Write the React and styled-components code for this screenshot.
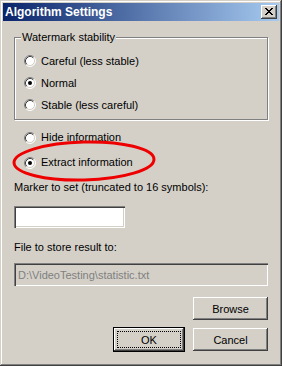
import React from 'react';
import styled, { createGlobalStyle } from 'styled-components';

const Global = createGlobalStyle`
  html, body {
    margin: 0;
    padding: 0;
    background: #d4d0c8;
  }
  * {
    box-sizing: border-box;
  }
`;

const Window = styled.div`
  position: relative;
  width: 282px;
  height: 366px;
  padding: 3px;
  background: #d4d0c8;
  font-family: 'Liberation Sans', Arial, sans-serif;
  font-size: 11px;
  color: #000;
  box-shadow: inset -1px -1px #404040, inset 1px 1px #d4d0c8,
    inset -2px -2px #808080, inset 2px 2px #fff;
  display: flex;
  flex-direction: column;
`;

const TitleBar = styled.div`
  height: 18px;
  display: flex;
  align-items: center;
  justify-content: space-between;
  padding: 0 2px 0 2px;
  background: linear-gradient(to right, #0a246a, #a6caf0);
`;

const Title = styled.span`
  color: #fff;
  font-weight: bold;
  font-size: 12px;
  line-height: 13px;
`;

const CloseButton = styled.div`
  width: 16px;
  height: 14px;
  background: #d4d0c8;
  display: flex;
  align-items: center;
  justify-content: center;
  box-shadow: inset -1px -1px #404040, inset 1px 1px #fff,
    inset -2px -2px #808080, inset 2px 2px #d4d0c8;
  svg {
    display: block;
    margin-top: -1px;
  }
`;

const Body = styled.div`
  flex: 1;
  display: flex;
  flex-direction: column;
  padding: 10px 11px 0 11px;
`;

const GroupBox = styled.fieldset`
  margin: 0;
  padding: 0;
  border: 1px solid #808080;
  box-shadow: 1px 1px 0 #fff, inset 1px 1px 0 #fff;
  min-width: 0;
`;

const Legend = styled.legend`
  margin-left: 6px;
  padding: 0 1px;
  line-height: 13px;
  background: #d4d0c8;
`;

const GroupInner = styled.div`
  padding: 6px 0 3px 9px;
`;

const RadioRow = styled.div`
  height: ${p => p.$h}px;
  display: flex;
  align-items: center;
  gap: 5px;
  line-height: 13px;
`;

const LowerRadios = styled.div`
  margin-top: 5px;
  padding-left: 10px;
`;

const Label = styled.div`
  line-height: 13px;
  margin-top: ${p => p.$mt}px;
`;

const TextBox = styled.div`
  width: ${p => p.$w};
  height: ${p => p.$h}px;
  margin-top: ${p => p.$mt}px;
  padding: 0 4px;
  display: flex;
  align-items: center;
  background: ${p => (p.$disabled ? '#d4d0c8' : '#fff')};
  color: #808080;
  box-shadow: inset 1px 1px #808080, inset 2px 2px #404040,
    inset -1px -1px #fff, inset -2px -2px #d4d0c8;
`;

const ButtonRow = styled.div`
  display: flex;
  justify-content: flex-end;
  gap: 8px;
  margin-top: ${p => p.$mt}px;
`;

const Button = styled.div`
  width: ${p => p.$w || 75}px;
  height: ${p => p.$h || 23}px;
  display: flex;
  align-items: center;
  justify-content: center;
  background: #d4d0c8;
  box-shadow: inset -1px -1px #404040, inset 1px 1px #fff,
    inset -2px -2px #808080, inset 2px 2px #d4d0c8;
`;

const DefaultButton = styled(Button)`
  border: 1px solid #000;
  margin-top: -1px;
  outline: 1px dotted #000;
  outline-offset: -5px;
`;

const Annotation = styled.svg`
  position: absolute;
  left: 10px;
  top: 138px;
  pointer-events: none;
`;

const Radio = ({ checked }) => (
  <svg width="12" height="12" viewBox="0 0 12 12">
    <circle cx="6" cy="6" r="5" fill="#fff" />
    <path d="M2.11 9.89 A5.5 5.5 0 0 1 9.89 2.11" fill="none" stroke="#808080" />
    <path d="M9.89 2.11 A5.5 5.5 0 0 1 2.11 9.89" fill="none" stroke="#fff" />
    <path d="M2.82 9.18 A4.5 4.5 0 0 1 9.18 2.82" fill="none" stroke="#404040" />
    <path d="M9.18 2.82 A4.5 4.5 0 0 1 2.82 9.18" fill="none" stroke="#d4d0c8" />
    {checked && <circle cx="6" cy="6" r="2" fill="#000" />}
  </svg>
);

const xPixels = [
  'xx....xx',
  '.xx..xx.',
  '..xxxx..',
  '...xx...',
  '..xxxx..',
  '.xx..xx.',
  'xx....xx',
];

const CloseGlyph = () => (
  <svg width="8" height="7" viewBox="0 0 8 7" shapeRendering="crispEdges">
    {xPixels.map((row, y) =>
      row.split('').map((c, x) =>
        c === 'x' ? <rect key={`${x}-${y}`} x={x} y={y} width="1" height="1" fill="#000" /> : null
      )
    )}
  </svg>
);

const stability = [
  { label: 'Careful (less stable)', checked: false },
  { label: 'Normal', checked: true },
  { label: 'Stable (less careful)', checked: false },
];

export default function App() {
  return (
    <Window>
      <Global />
      <TitleBar>
        <Title>Algorithm Settings</Title>
        <CloseButton>
          <CloseGlyph />
        </CloseButton>
      </TitleBar>
      <Body>
        <GroupBox>
          <Legend>Watermark stability</Legend>
          <GroupInner>
            {stability.map(s => (
              <RadioRow key={s.label} $h={22}>
                <Radio checked={s.checked} />
                {s.label}
              </RadioRow>
            ))}
          </GroupInner>
        </GroupBox>
        <LowerRadios>
          <RadioRow $h={25}>
            <Radio />
            Hide information
          </RadioRow>
          <RadioRow $h={25}>
            <Radio checked />
            Extract information
          </RadioRow>
        </LowerRadios>
        <Label $mt={6}>Marker to set (truncated to 16 symbols):</Label>
        <TextBox $w="111px" $h={22} $mt={12} />
        <Label $mt={13}>File to store result to:</Label>
        <TextBox $w="100%" $h={23} $mt={9} $disabled>
          D:\VideoTesting\statistic.txt
        </TextBox>
        <ButtonRow $mt={11}>
          <Button>Browse</Button>
        </ButtonRow>
        <ButtonRow $mt={8}>
          <DefaultButton $w={72} $h={25}>OK</DefaultButton>
          <Button>Cancel</Button>
        </ButtonRow>
      </Body>
      <Annotation width="148" height="46" viewBox="0 0 148 46">
        <ellipse
          cx="74"
          cy="23"
          rx="70"
          ry="19"
          fill="none"
          stroke="#ee0000"
          strokeWidth="3"
          transform="rotate(-1.5 74 23)"
        />
      </Annotation>
    </Window>
  );
}
